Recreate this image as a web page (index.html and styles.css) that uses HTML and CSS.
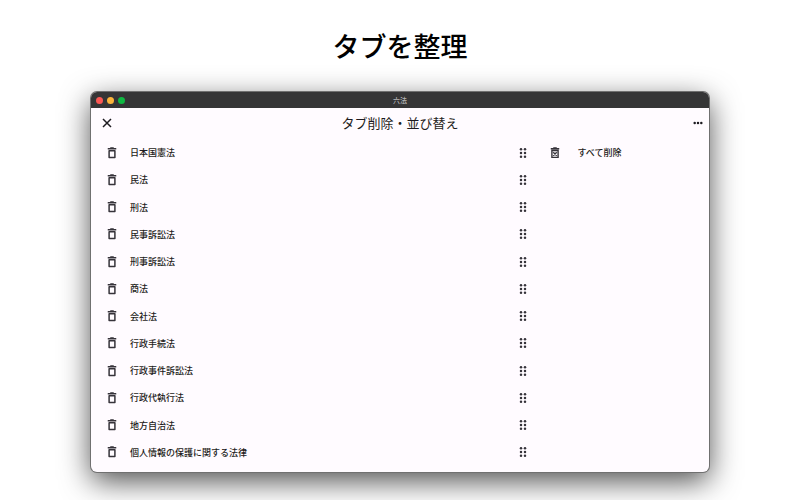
FILE: index.html
```html
<!DOCTYPE html>
<html lang="ja">
<head>
    <meta charset="UTF-8">
    <meta name="viewport" content="width=device-width, initial-scale=1.0">
    <title>タブを整理</title>
    <link rel="stylesheet" href="styles.css">
</head>
<body>

    <!-- Shared icons -->
    <svg class="sprite" aria-hidden="true">
        <symbol id="trash" viewBox="0 0 24 24">
            <path d="M3.5 3.4h17M8.5 2h7M6.2 7.4v13.4h11.6V7.4z" fill="none" stroke="currentColor" stroke-width="3" stroke-linejoin="round"/>
        </symbol>
        <symbol id="grip" viewBox="0 0 24 24">
            <g fill="currentColor">
                <circle cx="8" cy="4.5" r="2.5"/><circle cx="16" cy="4.5" r="2.5"/>
                <circle cx="8" cy="12" r="2.5"/><circle cx="16" cy="12" r="2.5"/>
                <circle cx="8" cy="19.5" r="2.5"/><circle cx="16" cy="19.5" r="2.5"/>
            </g>
        </symbol>
    </svg>

    <h1>タブを整理</h1>

    <div class="window">
        <div class="titlebar">
            <div class="lights">
                <span class="light red"></span>
                <span class="light yellow"></span>
                <span class="light green"></span>
            </div>
            <span class="app-name">六法</span>
        </div>

        <header class="header">
            <button class="icon-button" aria-label="閉じる">
                <svg class="icon close" viewBox="0 0 24 24"><path d="M4 4l16 16M20 4L4 20" fill="none" stroke="currentColor" stroke-width="3"/></svg>
            </button>
            <h2>タブ削除・並び替え</h2>
            <button class="icon-button menu" aria-label="メニュー">
                <svg class="more" viewBox="0 0 24 24"><g fill="currentColor"><circle cx="4" cy="12" r="3"/><circle cx="12" cy="12" r="3"/><circle cx="20" cy="12" r="3"/></g></svg>
            </button>
        </header>

        <main class="content">
            <ul class="tabs">
                <li class="row"><button class="icon-button" aria-label="削除"><svg class="icon"><use href="#trash"/></svg></button><span class="name">日本国憲法</span><button class="icon-button" aria-label="並び替え"><svg class="icon"><use href="#grip"/></svg></button></li>
                <li class="row"><button class="icon-button" aria-label="削除"><svg class="icon"><use href="#trash"/></svg></button><span class="name">民法</span><button class="icon-button" aria-label="並び替え"><svg class="icon"><use href="#grip"/></svg></button></li>
                <li class="row"><button class="icon-button" aria-label="削除"><svg class="icon"><use href="#trash"/></svg></button><span class="name">刑法</span><button class="icon-button" aria-label="並び替え"><svg class="icon"><use href="#grip"/></svg></button></li>
                <li class="row"><button class="icon-button" aria-label="削除"><svg class="icon"><use href="#trash"/></svg></button><span class="name">民事訴訟法</span><button class="icon-button" aria-label="並び替え"><svg class="icon"><use href="#grip"/></svg></button></li>
                <li class="row"><button class="icon-button" aria-label="削除"><svg class="icon"><use href="#trash"/></svg></button><span class="name">刑事訴訟法</span><button class="icon-button" aria-label="並び替え"><svg class="icon"><use href="#grip"/></svg></button></li>
                <li class="row"><button class="icon-button" aria-label="削除"><svg class="icon"><use href="#trash"/></svg></button><span class="name">商法</span><button class="icon-button" aria-label="並び替え"><svg class="icon"><use href="#grip"/></svg></button></li>
                <li class="row"><button class="icon-button" aria-label="削除"><svg class="icon"><use href="#trash"/></svg></button><span class="name">会社法</span><button class="icon-button" aria-label="並び替え"><svg class="icon"><use href="#grip"/></svg></button></li>
                <li class="row"><button class="icon-button" aria-label="削除"><svg class="icon"><use href="#trash"/></svg></button><span class="name">行政手続法</span><button class="icon-button" aria-label="並び替え"><svg class="icon"><use href="#grip"/></svg></button></li>
                <li class="row"><button class="icon-button" aria-label="削除"><svg class="icon"><use href="#trash"/></svg></button><span class="name">行政事件訴訟法</span><button class="icon-button" aria-label="並び替え"><svg class="icon"><use href="#grip"/></svg></button></li>
                <li class="row"><button class="icon-button" aria-label="削除"><svg class="icon"><use href="#trash"/></svg></button><span class="name">行政代執行法</span><button class="icon-button" aria-label="並び替え"><svg class="icon"><use href="#grip"/></svg></button></li>
                <li class="row"><button class="icon-button" aria-label="削除"><svg class="icon"><use href="#trash"/></svg></button><span class="name">地方自治法</span><button class="icon-button" aria-label="並び替え"><svg class="icon"><use href="#grip"/></svg></button></li>
                <li class="row"><button class="icon-button" aria-label="削除"><svg class="icon"><use href="#trash"/></svg></button><span class="name">個人情報の保護に関する法律</span><button class="icon-button" aria-label="並び替え"><svg class="icon"><use href="#grip"/></svg></button></li>
            </ul>

            <aside class="actions">
                <button class="delete-all">
                    <svg class="icon" viewBox="0 0 24 24"><path d="M3.5 3.4h17M8.5 2h7M5.8 7v13.8h12.4V7zM8.5 10.5l7 7M15.5 10.5l-7 7" fill="none" stroke="currentColor" stroke-width="2.8"/></svg>
                    すべて削除
                </button>
            </aside>
        </main>
    </div>

</body>
</html>
```

FILE: styles.css
```css
* {
    box-sizing: border-box;
}
body {
    margin: 0;
    min-height: 100vh;
    padding: 26px 91px 28px;
    display: flex;
    flex-direction: column;
    background-color: #fff;
    color: #1d1b20;
    font-family: "Noto Sans CJK JP", sans-serif;
    font-size: 9px;
    font-weight: 500;
}
.sprite {
    display: none;
}
h1 {
    margin: 0 0 26px;
    color: #000;
    font-size: 27px;
    font-weight: 500;
    line-height: 40px;
    text-align: center;
}
.window {
    flex: 1;
    display: flex;
    flex-direction: column;
    padding-bottom: 6px;
    background-color: #fffbff;
    border-radius: 6px;
    box-shadow: 0 0 0 1px #707070, 0 9px 30px rgba(0, 0, 0, 0.7);
}
.titlebar {
    display: grid;
    grid-template-columns: 1fr auto 1fr;
    align-items: center;
    height: 16px;
    padding: 0 5px;
    background-color: #353536;
    border-radius: 6px 6px 0 0;
}
.lights {
    display: flex;
    gap: 4px;
}
.light {
    width: 7px;
    height: 7px;
    border-radius: 50%;
}
.red {
    background-color: #fb5754;
}
.yellow {
    background-color: #fcb53b;
}
.green {
    background-color: #0fb942;
}
.app-name {
    color: #b4b4b5;
    font-size: 7px;
    line-height: 14px;
}
.header {
    display: grid;
    grid-template-columns: 1fr auto 1fr;
    align-items: center;
    height: 30px;
    padding: 0 6px;
}
.header .icon-button:first-child {
    padding-left: 4px;
}
h2 {
    margin: 0;
    font-size: 13px;
    font-weight: 400;
    line-height: 20px;
}
button {
    padding: 0;
    background: none;
    border: none;
    color: inherit;
    font: inherit;
    cursor: pointer;
}
.icon-button {
    display: flex;
}
.menu {
    justify-self: end;
}
.icon {
    width: 12px;
    height: 12px;
    color: #36333a;
}
.close {
    color: #1d1b20;
}
.more {
    width: 10px;
    height: 10px;
}
.content {
    flex: 1;
    display: grid;
    grid-template-columns: 5fr 2fr;
    padding-top: 1px;
}
.tabs {
    display: flex;
    flex-direction: column;
    margin: 0;
    padding: 0 3px 0 15px;
    list-style: none;
}
.row {
    flex: 1;
    display: flex;
    align-items: center;
    gap: 12px;
    min-height: 27px;
}
.name {
    flex: 1;
}
.actions {
    padding-left: 17px;
}
.delete-all {
    display: flex;
    align-items: center;
    gap: 16px;
    height: 27px;
}
```
